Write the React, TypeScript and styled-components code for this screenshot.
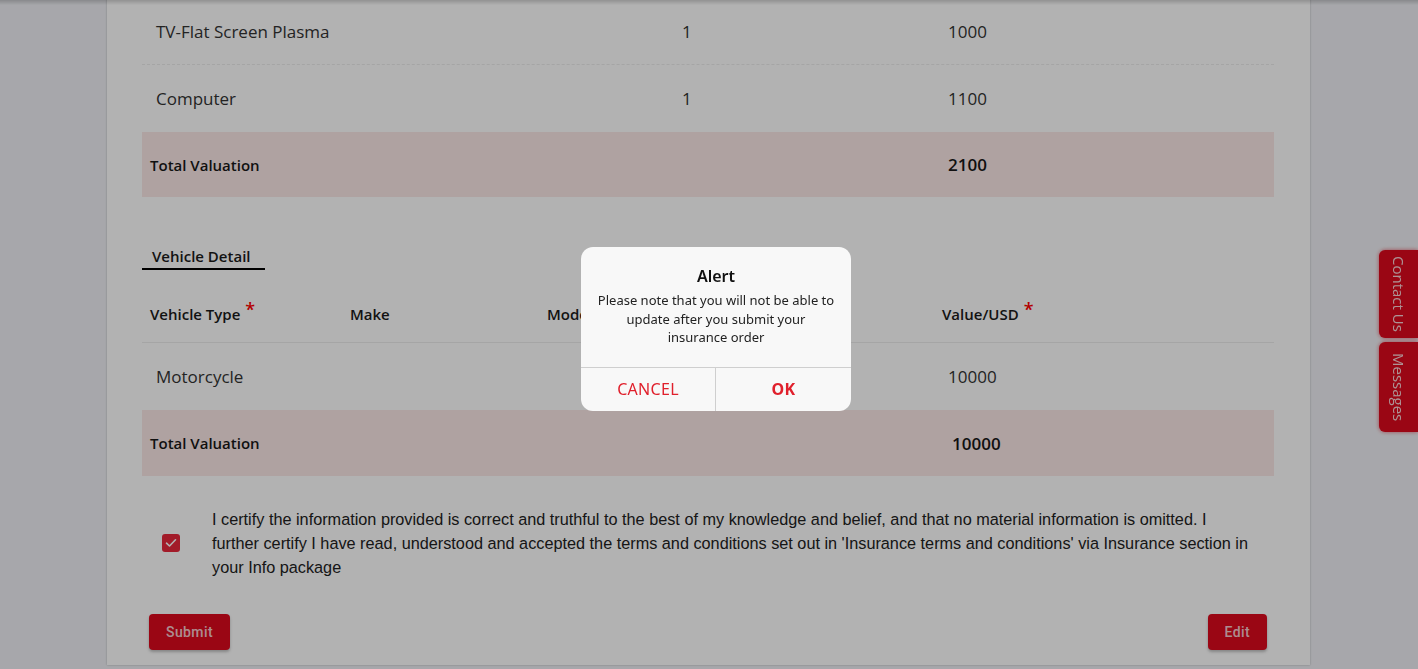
import { createGlobalStyle, styled } from "styled-components"

const GlobalStyle = createGlobalStyle`
    html, body {
        margin: 0;
        padding: 0;
        height: 100%;
        overflow: hidden;
        background-color: #eff0f5;
        font-family: "Open Sans", "Noto Sans", sans-serif;
        color: #333;
    }
`

const Page = styled.div`
    display: flex;
    padding-left: 107px;
    height: 669px;
`

const Panel = styled.div`
    width: 1203px;
    box-sizing: border-box;
    background-color: #fff;
    padding: 0 36px 15px 35px;
    margin-top: -2px;
    align-self: start;
    box-shadow: 0 0 2px rgba(0, 0, 0, 0.25);
`

const Row = styled.div<{ $cols: string; $height: number; $line?: string }>`
    display: grid;
    box-sizing: border-box;
    grid-template-columns: ${p => p.$cols};
    align-items: center;
    height: ${p => p.$height}px;
    border-bottom: ${p => p.$line || "none"};
`

const HeadRow = styled(Row)`
    align-items: end;
    padding-bottom: 18px;
`

const Cell = styled.div<{ $pad?: number }>`
    font-size: 17px;
    padding-left: ${p => p.$pad ?? 14}px;
    white-space: nowrap;
`

const TotalRow = styled(Row)`
    background-color: #fbe9e7;
`

const TotalLabel = styled.div`
    font-size: 15px;
    font-weight: 600;
    color: #181818;
    padding-left: 8px;
`

const TotalValue = styled.div<{ $pad?: number }>`
    font-size: 17px;
    font-weight: 600;
    color: #181818;
    padding-left: ${p => p.$pad ?? 14}px;
`

const Tab = styled.div`
    display: inline-block;
    margin-top: 49px;
    padding: 0 14px 2px 10px;
    font-size: 15px;
    font-weight: 600;
    color: #1a1a1a;
    border-bottom: 2px solid #000;
`

const HeadCell = styled.div<{ $pad?: number }>`
    font-size: 15px;
    font-weight: 600;
    color: #1a1a1a;
    padding-left: ${p => p.$pad ?? 8}px;
    white-space: nowrap;

    sup {
        color: #ff0000;
        font-size: 18px;
        margin-left: 5px;
        vertical-align: 4px;
        line-height: 0;
    }
`

const Certify = styled.label`
    display: flex;
    align-items: center;
    margin-top: 31px;
    padding-left: 20px;
    gap: 32px;
`

const Check = styled.span`
    flex: none;
    width: 18px;
    height: 18px;
    border-radius: 3px;
    background-color: #e9283c;
    display: flex;
    align-items: center;
    justify-content: center;
`

const CertifyText = styled.p`
    margin: 0;
    font-family: "Liberation Sans", Arial, sans-serif;
    font-size: 16.25px;
    line-height: 24px;
    color: #222;
    width: 1040px;
`

const Actions = styled.div`
    display: flex;
    justify-content: space-between;
    margin-top: 35px;
    padding: 0 7px;
`

const RedButton = styled.button`
    height: 36px;
    padding: 0 17px;
    border: none;
    border-radius: 4px;
    background-color: #dd0a1d;
    color: rgba(255, 255, 255, 0.8);
    font-family: Roboto, "Liberation Sans", sans-serif;
    font-size: 14px;
    font-weight: 500;
    letter-spacing: 0.4px;
    box-shadow: 0 2px 3px rgba(0, 0, 0, 0.25);
`

const SideTabs = styled.div`
    position: fixed;
    right: 0;
    top: 250px;
    display: flex;
    flex-direction: column;
    gap: 4px;
`

const SideTab = styled.div<{ $h: number }>`
    width: 39px;
    height: ${p => p.$h}px;
    box-sizing: border-box;
    background-color: #dd0a1d;
    border-radius: 6px 0 0 6px;
    writing-mode: vertical-rl;
    display: flex;
    align-items: center;
    justify-content: center;
    color: rgba(255, 255, 255, 0.82);
    font-size: 15px;
    box-shadow: 0 0 4px rgba(221, 10, 29, 0.6);
`

const TopShade = styled.div`
    position: fixed;
    left: 0;
    right: 0;
    top: 0;
    height: 5px;
    background: linear-gradient(rgba(0, 0, 0, 0.18), rgba(0, 0, 0, 0));
`

const Overlay = styled.div`
    position: fixed;
    inset: 0;
    background-color: rgba(0, 0, 0, 0.3);
`

const Dialog = styled.div`
    position: fixed;
    left: 581px;
    top: 247px;
    width: 270px;
    background-color: #f8f8f8;
    border-radius: 12px;
    overflow: hidden;
    text-align: center;
    font-family: "Noto Sans", "Open Sans", sans-serif;
`

const DialogBody = styled.div`
    padding: 16px 16px 20px;

    h3 {
        margin: 0 0 2px;
        font-size: 16px;
        font-weight: 600;
        color: #111;
        line-height: 26px;
    }

    p {
        margin: 0;
        font-size: 13px;
        line-height: 18.5px;
        color: #222;
    }
`

const DialogActions = styled.div`
    display: grid;
    grid-template-columns: 134px 1fr;
    border-top: 1px solid #cfcfcf;
    height: 43px;
`

const DialogButton = styled.button<{ $bold?: boolean }>`
    border: none;
    background: none;
    font-family: "Noto Sans", "Open Sans", sans-serif;
    font-size: 16px;
    font-weight: ${p => (p.$bold ? 700 : 400)};
    color: #e0202c;
    letter-spacing: 0.3px;

    & + & {
        border-left: 1px solid #cfcfcf;
    }
`

const itemCols = "526px 266px 1fr"
const vehicleCols = "200px 200px 200px 200px 1fr"

export default function App() {
    return (
        <>
            <GlobalStyle />
            <Page>
                <Panel>
                    <Row $cols={itemCols} $height={67} $line="1px dashed #ececec">
                        <Cell>TV-Flat Screen Plasma</Cell>
                        <Cell>1</Cell>
                        <Cell>1000</Cell>
                    </Row>
                    <Row $cols={itemCols} $height={67}>
                        <Cell>Computer</Cell>
                        <Cell>1</Cell>
                        <Cell>1100</Cell>
                    </Row>
                    <TotalRow $cols={itemCols} $height={65}>
                        <TotalLabel>Total Valuation</TotalLabel>
                        <span />
                        <TotalValue>2100</TotalValue>
                    </TotalRow>

                    <Tab>Vehicle Detail</Tab>

                    <HeadRow $cols={vehicleCols} $height={73} $line="1px solid #ececec">
                        <HeadCell>Vehicle Type<sup>*</sup></HeadCell>
                        <HeadCell>Make</HeadCell>
                        <HeadCell $pad={5}>Model</HeadCell>
                        <span />
                        <HeadCell $pad={0}>Value/USD<sup>*</sup></HeadCell>
                    </HeadRow>
                    <Row $cols={vehicleCols} $height={67}>
                        <Cell>Motorcycle</Cell>
                        <span />
                        <span />
                        <span />
                        <Cell $pad={6}>10000</Cell>
                    </Row>
                    <TotalRow $cols={vehicleCols} $height={66}>
                        <TotalLabel>Total Valuation</TotalLabel>
                        <span />
                        <span />
                        <span />
                        <TotalValue $pad={10}>10000</TotalValue>
                    </TotalRow>

                    <Certify>
                        <Check>
                            <svg width="12" height="10" viewBox="0 0 12 10">
                                <path d="M1.5 5.2 L4.5 8 L10.5 1.8" fill="none" stroke="#fff" strokeWidth="1.6" strokeLinecap="round" strokeLinejoin="round" />
                            </svg>
                        </Check>
                        <CertifyText>
                            I certify the information provided is correct and truthful to the best of my knowledge and belief, and that no material information is omitted. I further certify I have read, understood and accepted the terms and conditions set out in 'Insurance terms and conditions' via Insurance section in your Info package
                        </CertifyText>
                    </Certify>

                    <Actions>
                        <RedButton>Submit</RedButton>
                        <RedButton>Edit</RedButton>
                    </Actions>
                </Panel>
            </Page>

            <TopShade />

            <SideTabs>
                <SideTab $h={88}>Contact Us</SideTab>
                <SideTab $h={90}>Messages</SideTab>
            </SideTabs>

            <Overlay />

            <Dialog>
                <DialogBody>
                    <h3>Alert</h3>
                    <p>Please note that you will not be able to update after you submit your insurance order</p>
                </DialogBody>
                <DialogActions>
                    <DialogButton>CANCEL</DialogButton>
                    <DialogButton $bold>OK</DialogButton>
                </DialogActions>
            </Dialog>
        </>
    )
}
